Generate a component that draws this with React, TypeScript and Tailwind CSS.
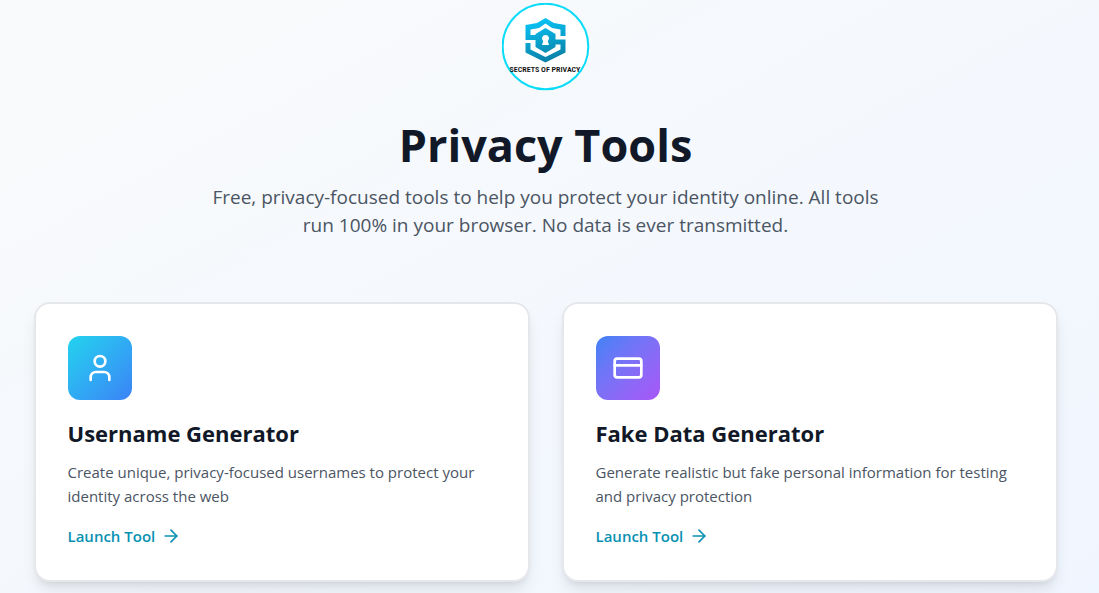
import { ArrowRight, CreditCard, User, type LucideIcon } from "lucide-react";

type Tool = {
  title: string;
  description: string;
  href: string;
  icon: LucideIcon;
  tile: string;
};

const tools: Tool[] = [
  {
    title: "Username Generator",
    description:
      "Create unique, privacy-focused usernames to protect your identity across the web",
    href: "#username-generator",
    icon: User,
    tile: "from-[#22d3ee] to-[#3b82f6]",
  },
  {
    title: "Fake Data Generator",
    description:
      "Generate realistic but fake personal information for testing and privacy protection",
    href: "#fake-data-generator",
    icon: CreditCard,
    tile: "from-[#3b82f6] to-[#a855f7]",
  },
];

function Logo() {
  return (
    <svg viewBox="0 0 88 88" className="size-[88px]" role="img" aria-label="Secrets of Privacy">
      <defs>
        <linearGradient id="shield" gradientUnits="userSpaceOnUse" x1="38" y1="15" x2="50" y2="60">
          <stop offset="0" stopColor="#08c4f6" />
          <stop offset="1" stopColor="#0b7ca2" />
        </linearGradient>
      </defs>
      <circle cx="43.500" cy="43.500" r="42.800" fill="#fff" stroke="#0adcf8" strokeWidth="2" />
      <g fill="url(#shield)">
        <path d="M43.500 15 L52 20 L63.500 22 V33 H58.500 V26.500 L50 25 L43.500 20.500 L37 25 L28.500 26.500 V32 H36 V37 H23.500 V22 L35 20 Z" />
        <path d="M63.500 36.500 V49.500 L43.500 59.500 L23.500 49.500 V40 H28.500 V46.500 L43.500 54 L58.500 46.500 V41.500 H51 V36.500 Z" />
        <path d="M43.500 25 L53.500 31 V44 L43.500 50 L33.500 44 V31 Z" />
      </g>
      <path d="M43.500 32 a3.500 3.500 0 0 1 2.300 6.200 L47 42 H40 L41.200 38.200 A3.500 3.500 0 0 1 43.500 32 Z" fill="#fff" />
      <text
        x="43"
        y="69"
        textAnchor="middle"
        className="fill-[#111111] font-['Roboto_Condensed','Roboto',sans-serif] text-[8px] font-semibold"
      >
        SECRETS OF PRIVACY
      </text>
    </svg>
  );
}

function ToolCard({ tool }: { tool: Tool }) {
  const Icon = tool.icon;
  return (
    <a
      href={tool.href}
      className="block rounded-2xl border-2 border-gray-200 bg-white p-8 shadow-lg"
    >
      <div className={`mb-4 flex size-16 items-center justify-center rounded-xl bg-linear-to-br ${tool.tile}`}>
        <Icon className="size-8 text-white" />
      </div>
      <h2 className="mb-2.5 text-[22px] leading-[34px] font-bold text-[#111827]">{tool.title}</h2>
      <p className="mb-4 text-[15px] leading-6 text-[#4b5563]">{tool.description}</p>
      <span className="flex items-center gap-1.5 text-[15px] leading-6 font-semibold text-[#0891b2]">
        Launch Tool
        <ArrowRight className="size-5" />
      </span>
    </a>
  );
}

export default function App() {
  return (
    <div className="min-h-screen bg-linear-to-br from-[#f9fafb] to-[#f0f6ff] pt-[3px] pr-2 pb-3 font-['Open_Sans','Noto_Sans',sans-serif]">
      <header className="flex flex-col items-center text-center">
        <Logo />
        <h1 className="mt-6 text-[45px] leading-[60px] font-bold text-[#111827]">Privacy Tools</h1>
        <p className="mt-2 max-w-2xl text-[19px] leading-7 text-[#4b5563]">
          Free, privacy-focused tools to help you protect your identity online. All tools run 100%
          in your browser. No data is ever transmitted.
        </p>
      </header>
      <main className="mx-auto mt-[63px] grid max-w-5xl grid-cols-2 gap-8">
        {tools.map((tool) => (
          <ToolCard key={tool.title} tool={tool} />
        ))}
      </main>
    </div>
  );
}
